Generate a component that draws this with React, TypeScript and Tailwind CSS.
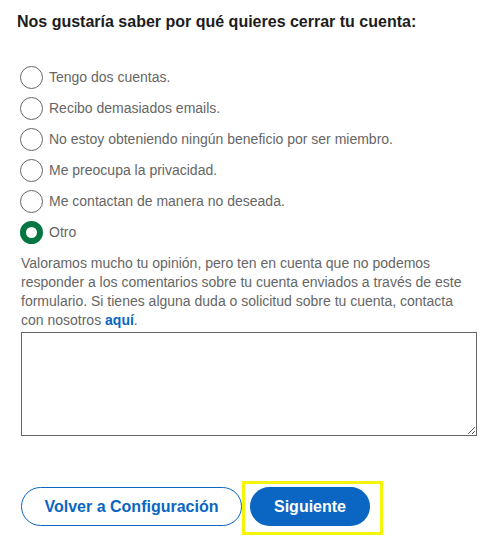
import React, { useState } from 'react';

const reasons = [
    'Tengo dos cuentas.',
    'Recibo demasiados emails.',
    'No estoy obteniendo ningún beneficio por ser miembro.',
    'Me preocupa la privacidad.',
    'Me contactan de manera no deseada.',
    'Otro',
];

export default function App() {
    const [selected, setSelected] = useState(5);

    return (
        <div className="w-[497px] h-[547px] bg-white pt-[12px] pl-[17px] font-['Liberation_Sans',Arial,sans-serif]">
            {/* Header */}
            <h2 className="text-[16px] leading-[20px] font-bold text-[#1d1d1d]">
                Nos gustaría saber por qué quieres cerrar tu cuenta:
            </h2>

            <div className="pl-[4px] w-[460px]">
                {/* Reasons */}
                <div className="mt-[30px] flex flex-col">
                    {reasons.map((r, i) => (
                        <label
                            key={r}
                            className="h-[31px] flex items-center gap-[6px] -ml-px cursor-pointer"
                            onClick={() => setSelected(i)}
                        >
                            {selected === i ? (
                                <span className="w-[23px] h-[23px] rounded-full border-[6px] border-[#057642] bg-white shrink-0" />
                            ) : (
                                <span className="w-[23px] h-[23px] rounded-full border-[1.5px] border-[#666666] bg-white shrink-0" />
                            )}
                            <span className="text-[14px] leading-[19px] text-[#666666]">{r}</span>
                        </label>
                    ))}
                </div>

                {/* Notice */}
                <p className="mt-[6px] w-[456px] text-[14px] leading-[19px] text-[#666666]">
                    Valoramos mucho tu opinión, pero ten en cuenta que no podemos responder a los comentarios sobre tu
                    cuenta enviados a través de este formulario. Si tienes alguna duda o solicitud sobre tu cuenta,
                    contacta con nosotros <a href="#" className="font-bold text-[#0a66c2]">aquí</a>.
                </p>

                <textarea className="mt-[2px] block w-[456px] h-[104px] border border-[#666666] bg-white outline-none" />

                {/* Actions */}
                <div className="mt-[51px] flex items-center gap-2">
                    <button className="w-[221px] h-[39px] rounded-full border border-[#0a66c2] text-[#0a66c2] text-[16px] font-bold bg-white">
                        Volver a Configuración
                    </button>
                    <div className="relative">
                        <button className="w-[120px] h-[39px] rounded-full bg-[#0a66c2] text-white text-[16px] font-bold">
                            Siguiente
                        </button>
                        <div className="absolute -top-[6px] -left-[8px] -right-[13px] -bottom-[9px] border-[3px] border-[#f5f50a] pointer-events-none" />
                    </div>
                </div>
            </div>
        </div>
    );
}
